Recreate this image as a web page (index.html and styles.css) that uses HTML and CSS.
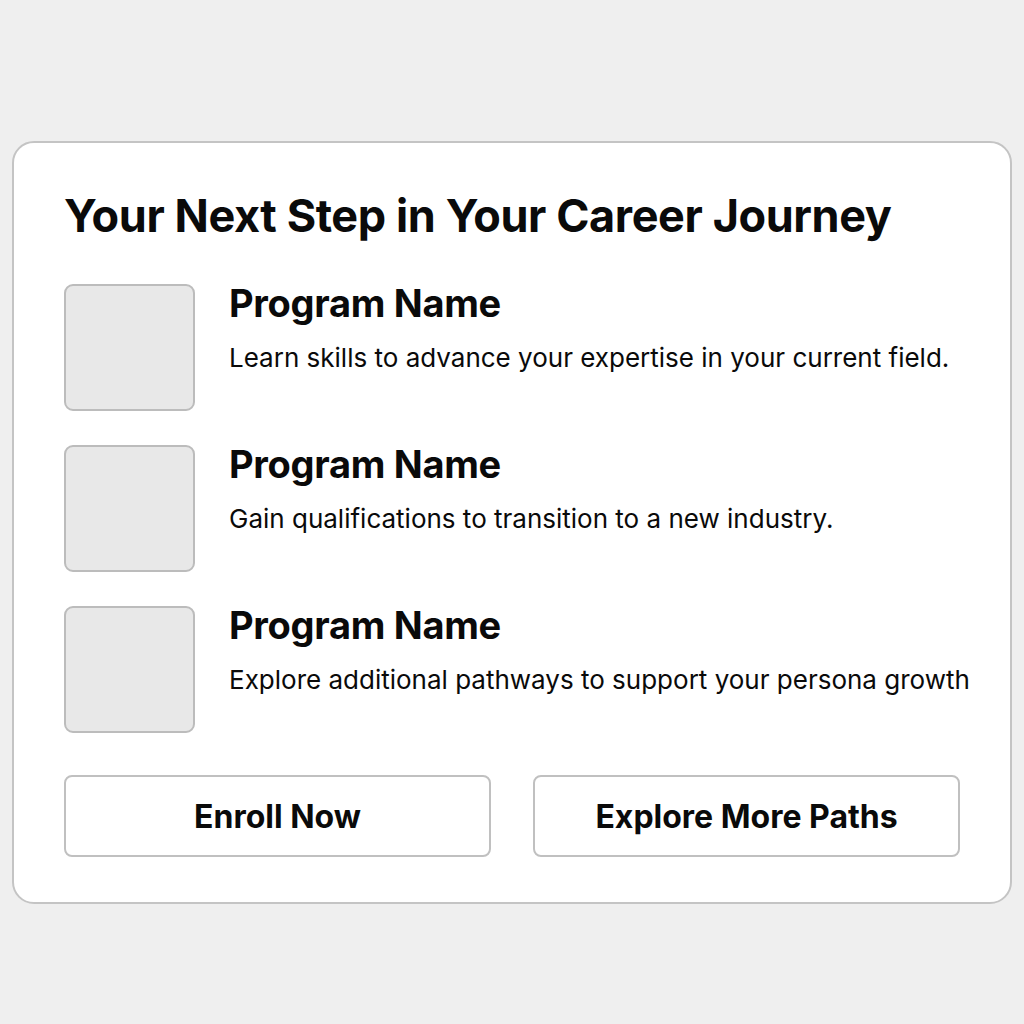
FILE: index.html
```html
<!DOCTYPE html>
<html>
<head>
    <meta charset="utf-8">
    <title>Career Journey</title>
    <link rel="stylesheet" href="styles.css">
</head>
<body>
    <div class="card">
        <h1>Your Next Step in Your Career Journey</h1>
        <div class="programs">
            <div class="program">
                <div class="thumb"></div>
                <div class="info">
                    <h2>Program Name</h2>
                    <p>Learn skills to advance your expertise in your current field.</p>
                </div>
            </div>
            <div class="program">
                <div class="thumb"></div>
                <div class="info">
                    <h2>Program Name</h2>
                    <p>Gain qualifications to transition to a new industry.</p>
                </div>
            </div>
            <div class="program">
                <div class="thumb"></div>
                <div class="info">
                    <h2>Program Name</h2>
                    <p>Explore additional pathways to support your persona growth</p>
                </div>
            </div>
        </div>
        <div class="actions">
            <button>Enroll Now</button>
            <button>Explore More Paths</button>
        </div>
    </div>
</body>
</html>
```

FILE: styles.css
```css
body {
    margin: 0;
    padding-top: 141px;
    background-color: #efefef;
    font-family: Inter, "Noto Sans", Arial, sans-serif;
    color: #0a0a0a;
}
.card {
    box-sizing: border-box;
    width: 1000px;
    height: 763px;
    margin-left: 12px;
    padding: 49px 50px 46px 50px;
    background-color: #fff;
    border: 2px solid #c4c4c4;
    border-radius: 22px;
}
h1 {
    margin: 0;
    font-size: 45px;
    font-weight: 700;
    letter-spacing: -0.4px;
    line-height: 48px;
}
.programs {
    display: flex;
    flex-direction: column;
    gap: 34px;
    margin-top: 44px;
}
.program {
    display: flex;
    gap: 34px;
}
.thumb {
    box-sizing: border-box;
    width: 131px;
    height: 127px;
    flex: none;
    background-color: #e8e8e8;
    border: 2px solid #bcbcbc;
    border-radius: 9px;
}
.info h2 {
    margin: 0;
    font-size: 38px;
    font-weight: 700;
    line-height: 38px;
    letter-spacing: -0.3px;
}
.info p {
    margin: 20px 0 0;
    font-size: 26px;
    line-height: 32px;
    white-space: nowrap;
}
.actions {
    display: flex;
    gap: 42px;
    margin-top: 42px;
}
.actions button {
    box-sizing: border-box;
    width: 428px;
    height: 82px;
    background-color: #fff;
    border: 2px solid #c0c0c0;
    border-radius: 8px;
    font-family: inherit;
    font-size: 32px;
    font-weight: 700;
    color: #0a0a0a;
}
```
